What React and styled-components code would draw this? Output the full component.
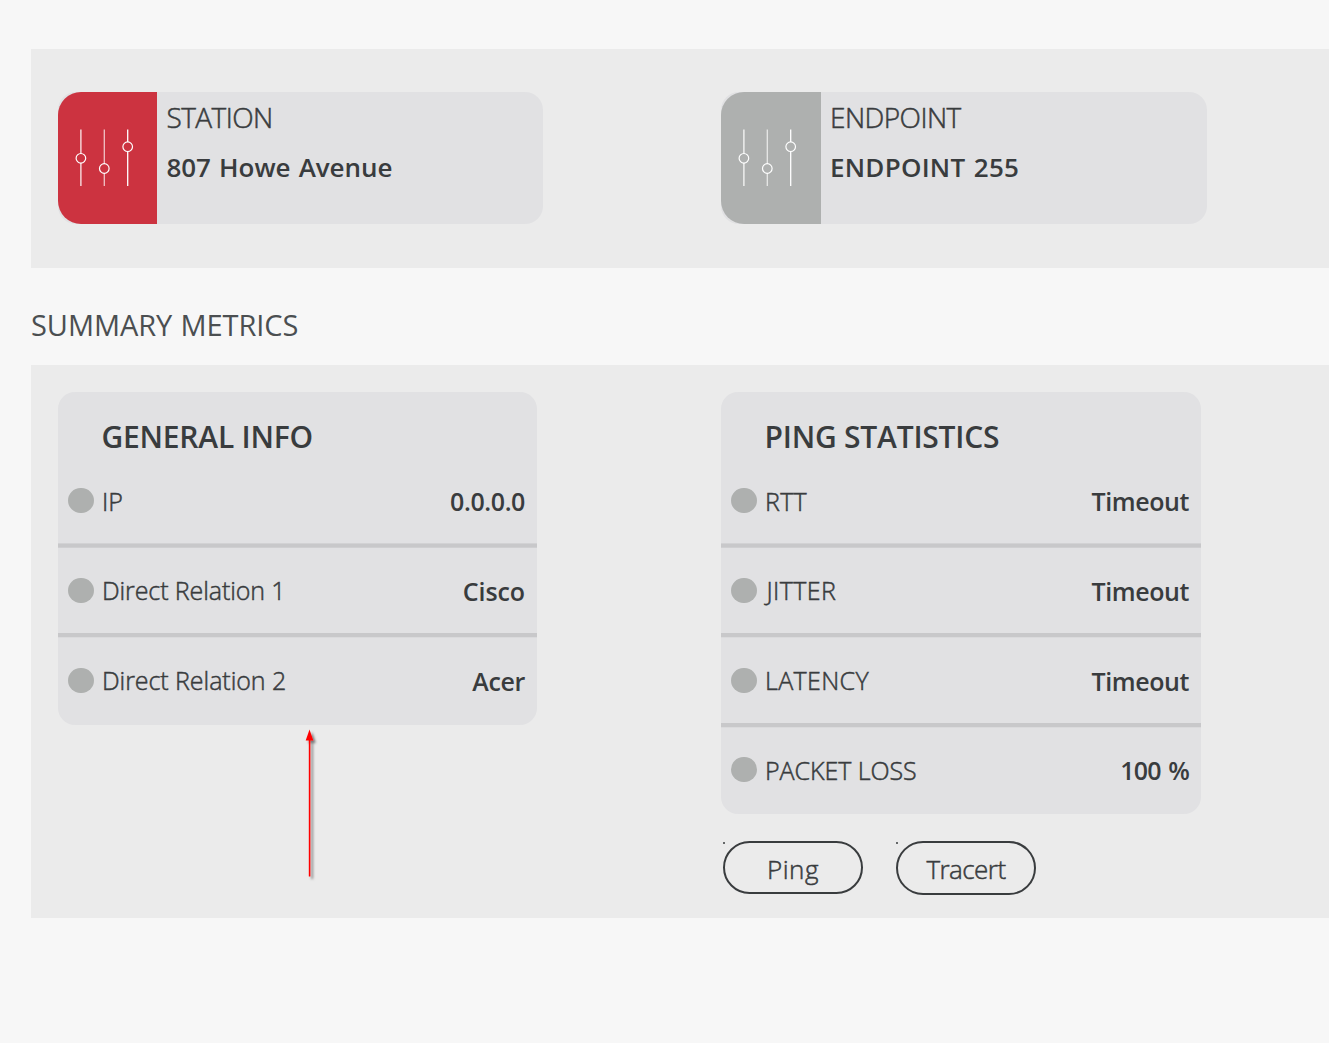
import React from 'react';
import styled, { createGlobalStyle } from 'styled-components';

const GlobalStyle = createGlobalStyle`
  *, *::before, *::after { box-sizing: border-box; }
  body {
    margin: 0;
    background: #f7f7f7;
    color: #393c3e;
    font-family: "Open Sans", "Noto Sans", sans-serif;
    overflow: hidden;
  }
`;

const Page = styled.main`
  min-height: 1043px;
  padding: 49px 0 0 31px;
`;

const Panel = styled.section`
  position: relative;
  display: grid;
  grid-template-columns: 663px 1fr;
  align-items: start;
  height: ${(p) => p.$height}px;
  padding: ${(p) => p.$top}px 0 0 27px;
  background: #ebebeb;
`;

const SectionTitle = styled.h2`
  margin: 0;
  padding: 37px 0 20px;
  color: #4b4f51;
  font-size: 29px;
  font-weight: 400;
  line-height: 40px;
  letter-spacing: -0.08px;
  word-spacing: 1px;
`;

const DeviceCard = styled.article`
  display: flex;
  width: ${(p) => p.$width}px;
  height: 132px;
  border-radius: 18px;
  background: #e1e1e3;
`;

const DeviceBadge = styled.div`
  flex: none;
  width: ${(p) => p.$width}px;
  height: 132px;
  border-radius: 23px 0 0 23px;
  background: ${(p) => p.$color};

  svg { display: block; }
`;

const DeviceText = styled.div`
  padding-left: ${(p) => p.$left}px;
  line-height: 50px;
  white-space: nowrap;
`;

const DeviceKind = styled.div`
  font-size: 28px;
  font-weight: 300;
  letter-spacing: -0.55px;
  -webkit-text-stroke: 0.5px currentColor;
`;

const DeviceName = styled.div`
  font-size: 26px;
  font-weight: 600;
  letter-spacing: ${(p) => p.$tracking}px;
  word-spacing: 1.5px;
`;

const MetricCard = styled.article`
  width: ${(p) => p.$width}px;
  height: ${(p) => p.$height}px;
  border-radius: 17px;
  background: #e1e1e3;
`;

const MetricTitle = styled.h3`
  margin: 0;
  height: 66px;
  padding: 22px 0 0 43.5px;
  font-size: 30px;
  font-weight: 600;
  line-height: 46px;
  letter-spacing: -0.22px;
`;

const MetricRow = styled.div`
  display: flex;
  align-items: center;
  height: ${(p) => (p.$short ? 83 : 85)}px;
  padding: 0 12px 0 10px;
  font-size: 25px;
  line-height: 34px;
  white-space: nowrap;
`;

const Divider = styled.div`
  height: 5px;
  background: #c8c8ca;
  border-top: ${(p) => (p.$first ? '1px solid #d2d2d4' : '0')};
  border-bottom: 1px solid ${(p) => (p.$first ? '#cfcfd1' : '#dadadc')};
`;

const StatusDot = styled.span`
  flex: none;
  width: 25.5px;
  height: 25.5px;
  margin-right: 8.5px;
  border-radius: 50%;
  background: #aeb0af;
`;

const MetricLabel = styled.span`
  flex: 1;
  padding: 0 0 ${(p) => (p.$raised ? 2 : 0)}px ${(p) => p.$indent || 0}px;
  font-weight: 300;
  letter-spacing: ${(p) => p.$tracking || 0}px;
  -webkit-text-stroke: 0.5px currentColor;
`;

const MetricValue = styled.span`
  padding-top: 1px;
  font-weight: 600;
  letter-spacing: ${(p) => p.$tracking || 0}px;
  word-spacing: 2px;
`;

const Actions = styled.div`
  display: flex;
  align-items: flex-start;
  gap: 33px;
  padding: 27px 0 0 2px;
`;

const ActionButton = styled.button`
  position: relative;
  width: 140px;
  height: ${(p) => p.$height}px;
  padding: 2px 0 0;
  border: 2px solid #393c3e;
  border-radius: 27px;
  background: transparent;
  color: inherit;
  font-family: inherit;
  font-size: 26px;
  font-weight: 300;
  line-height: 48px;
  letter-spacing: ${(p) => p.$tracking}px;
  -webkit-text-stroke: 0.5px currentColor;

  &::before {
    content: "";
    position: absolute;
    top: -1px;
    left: -2px;
    width: 2px;
    height: 2px;
    border-radius: 1px;
    background: #393c3e;
  }
`;

const Pointer = styled.svg`
  position: absolute;
  left: 269px;
  top: 361px;
`;

const sliders = [
  { x: 22.9, y: 66.3, opacity: 0.9 },
  { x: 46.3, y: 76.5, opacity: 0.7 },
  { x: 69.7, y: 54.7, opacity: 1 },
];

function SlidersIcon() {
  return (
    <svg width="99" height="132" viewBox="0 0 99 132" fill="none" stroke="#fff">
      {sliders.map((s) => (
        <g key={s.x}>
          <path
            d={`M${s.x} 37.5V${s.y - 4.8}M${s.x} ${s.y + 4.8}V94`}
            strokeWidth="1.3"
            opacity={s.opacity}
          />
          <circle cx={s.x} cy={s.y} r="4.8" strokeWidth="1.2" />
        </g>
      ))}
    </svg>
  );
}

function Device({ kind, name, color, width, badge, textLeft, tracking }) {
  return (
    <DeviceCard $width={width}>
      <DeviceBadge $color={color} $width={badge}>
        <SlidersIcon />
      </DeviceBadge>
      <DeviceText $left={textLeft}>
        <DeviceKind>{kind}</DeviceKind>
        <DeviceName $tracking={tracking}>{name}</DeviceName>
      </DeviceText>
    </DeviceCard>
  );
}

function Metrics({ title, rows, width, height }) {
  return (
    <MetricCard $width={width} $height={height}>
      <MetricTitle>{title}</MetricTitle>
      {rows.map((row, i) => (
        <React.Fragment key={row.label}>
          {i > 0 && <Divider $first={i === 1} />}
          <MetricRow $short={i === 3}>
            <StatusDot />
            <MetricLabel
              $raised={i === 1 || i === 2}
              $indent={row.labelIndent}
              $tracking={row.labelTracking}
            >
              {row.label}
            </MetricLabel>
            <MetricValue $tracking={row.valueTracking}>{row.value}</MetricValue>
          </MetricRow>
        </React.Fragment>
      ))}
    </MetricCard>
  );
}

const generalRows = [
  { label: 'IP', value: '0.0.0.0', valueTracking: -0.4 },
  { label: 'Direct Relation 1', labelTracking: -0.1, value: 'Cisco', valueTracking: -0.1 },
  { label: 'Direct Relation 2', labelTracking: -0.06, value: 'Acer', valueTracking: -0.35 },
];

const pingRows = [
  { label: 'RTT', labelTracking: 0.27, value: 'Timeout', valueTracking: -0.4 },
  { label: 'JITTER', labelTracking: 0.4, labelIndent: 1.5, value: 'Timeout', valueTracking: -0.4 },
  { label: 'LATENCY', labelTracking: 0.35, value: 'Timeout', valueTracking: -0.4 },
  { label: 'PACKET LOSS', labelTracking: -0.06, value: '100 %', valueTracking: -0.85 },
];

export default function App() {
  return (
    <Page>
      <GlobalStyle />
      <Panel $height={219} $top={43}>
        <Device
          kind="STATION"
          name="807 Howe Avenue"
          color="#cc3340"
          width={485}
          badge={99}
          textLeft={9.5}
          tracking={-0.06}
        />
        <Device
          kind="ENDPOINT"
          name="ENDPOINT 255"
          color="#aeb0af"
          width={486}
          badge={100}
          textLeft={9}
          tracking={0.25}
        />
      </Panel>
      <SectionTitle>SUMMARY METRICS</SectionTitle>
      <Panel $height={553} $top={27}>
        <Metrics title="GENERAL INFO" rows={generalRows} width={479} height={333} />
        <div>
          <Metrics title="PING STATISTICS" rows={pingRows} width={480} height={422} />
          <Actions>
            <ActionButton $height={53} $tracking={0.5}>Ping</ActionButton>
            <ActionButton $height={54} $tracking={-0.55}>Tracert</ActionButton>
          </Actions>
        </div>
        <Pointer width="24" height="160" viewBox="0 0 24 160">
          <defs>
            <filter id="pointer-shadow" x="-100%" y="-10%" width="400%" height="120%">
              <feDropShadow dx="2.5" dy="2.5" stdDeviation="1.3" floodColor="#000" floodOpacity="0.5" />
            </filter>
          </defs>
          <g filter="url(#pointer-shadow)" fill="#f00">
            <path d="M9.5 3.5L13.3 14.5H5.7Z" />
            <rect x="8.8" y="14" width="1.6" height="136.5" />
          </g>
        </Pointer>
      </Panel>
    </Page>
  );
}
